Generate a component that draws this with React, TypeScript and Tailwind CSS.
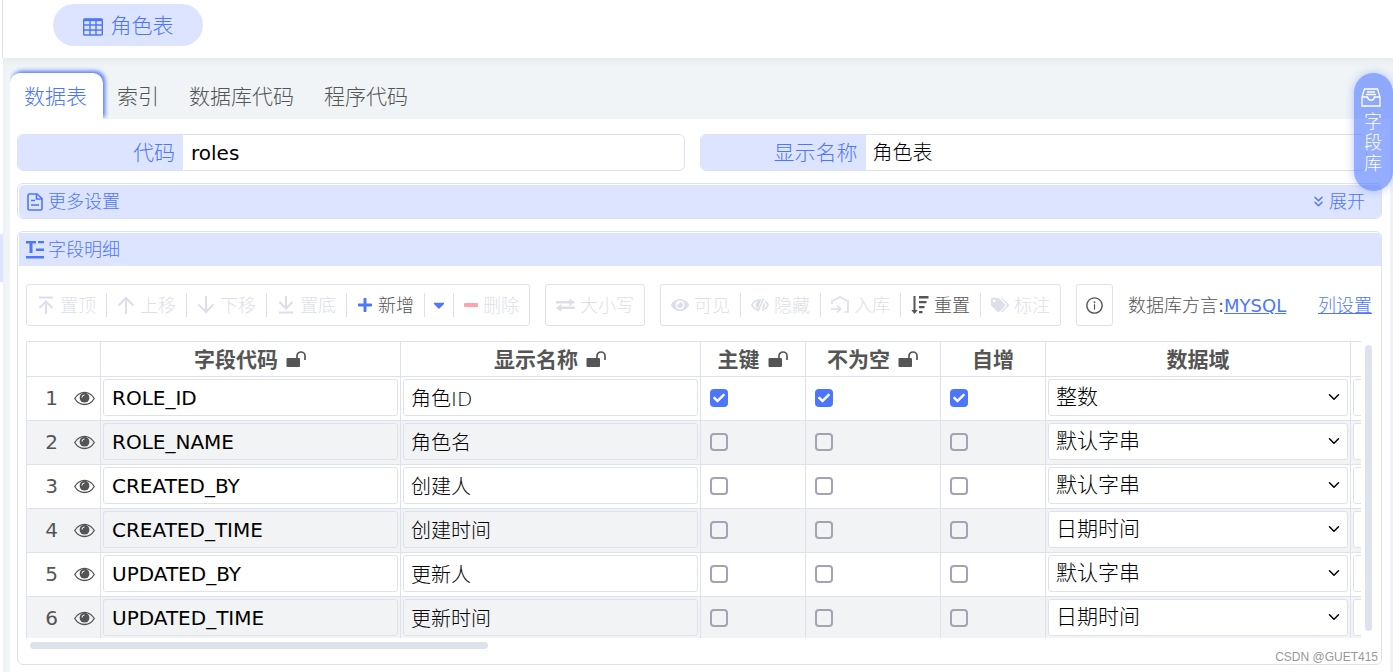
import React, { useState } from 'react';
import { AiOutlineInfoCircle } from 'react-icons/ai';
import { FaPlus, FaEye, FaTags, FaCaretDown, FaCheck } from 'react-icons/fa';
import { ChevronDown, ChevronsDown } from 'lucide-react';

interface Field {
  code: string;
  name: string;
  checked: boolean;
  domain: string;
}

const FIELDS: Field[] = [
  { code: 'ROLE_ID', name: '角色ID', checked: true, domain: '整数' },
  { code: 'ROLE_NAME', name: '角色名', checked: false, domain: '默认字串' },
  { code: 'CREATED_BY', name: '创建人', checked: false, domain: '默认字串' },
  { code: 'CREATED_TIME', name: '创建时间', checked: false, domain: '日期时间' },
  { code: 'UPDATED_BY', name: '更新人', checked: false, domain: '默认字串' },
  { code: 'UPDATED_TIME', name: '更新时间', checked: false, domain: '日期时间' },
];

const DOMAINS = ['整数', '默认字串', '日期时间'];
const TABS = ['数据表', '索引', '数据库代码', '程序代码'];

function TableIcon() {
  return (
    <svg width="20" height="18" viewBox="0 0 20 18" fill="none" stroke="currentColor" strokeWidth="1.4">
      <rect x="0.7" y="1" width="18.6" height="16" rx="1" />
      <path d="M1 2h18" strokeWidth="2.4" />
      <path d="M1 7h18M1 12h18M7 2v15M13 2v15" />
    </svg>
  );
}

function DocIcon() {
  return (
    <svg width="16" height="18" viewBox="0 0 16 18" fill="none" stroke="currentColor" strokeWidth="1.6">
      <path d="M10 1H2.5A1.5 1.5 0 0 0 1 2.5v13A1.5 1.5 0 0 0 2.5 17h11a1.5 1.5 0 0 0 1.5-1.5V5.500z" />
      <path d="M9.5 1.5V6H15M4 7.500h4M4 12h8" />
    </svg>
  );
}

function TextIcon() {
  return (
    <svg width="18" height="18" viewBox="0 0 18 18" fill="currentColor">
      <path d="M0 0h10v2.500H6.500V12h-3V2.500H0zM12 0h6v2.300h-6zM10 7.500h8V10h-8zM0 15h18v2.500H0z" />
    </svg>
  );
}

// up and down arrows of the move buttons, with a bar for top / bottom
function MoveIcon({ down, bar }: { down?: boolean; bar?: boolean }) {
  return (
    <svg
      width="18"
      height="18"
      viewBox="0 0 18 18"
      fill="none"
      stroke="currentColor"
      strokeWidth="2"
      className={down ? 'rotate-180' : ''}
    >
      {bar ? <path d="M2 1.500h14M9 18V6M2.500 12 9 5.500l6.500 6.500" /> : <path d="M9 18V2M1.500 9.500 9 2l7.500 7.500" />}
    </svg>
  );
}

function MinusIcon() {
  return (
    <svg width="14" height="14" viewBox="0 0 14 14" className="text-[#ffa3ab]">
      <rect y="5" width="14" height="4" rx="1" fill="currentColor" />
    </svg>
  );
}

function PlusIcon() {
  return <FaPlus size={16} className="text-[#4d76ff]" />;
}

function ExchangeIcon() {
  return (
    <svg width="19" height="14" viewBox="0 0 19 14" fill="currentColor">
      <path d="M0 3h13.500V0.200L19 4.200l-5.500 4V5.400H0zM19 11H5.500v2.800L0 10l5.500-4.200v2.800H19z" />
    </svg>
  );
}

function HiddenIcon() {
  return (
    <svg width="18" height="18" viewBox="0 0 18 18" fill="none" stroke="currentColor" strokeWidth="1.7">
      <path d="M7.500 14C4 13.500 1.800 11 .9 9 2.500 5.800 5.500 4 9 4h1.500M14 5.400c1.500 1 2.500 2.200 3.100 3.600-1 2.300-3.200 4.300-6.100 4.900" />
      <path d="M12.700 2.500 6.700 15.500" />
      <path d="M8.500 5.500a3.500 3.500 0 0 0-2 6z" fill="currentColor" />
      <path d="M12.800 7.500a3.500 3.500 0 0 1-1.800 4.500" />
    </svg>
  );
}

function ImportIcon() {
  return (
    <svg width="18" height="18" viewBox="0 0 18 18" fill="none" stroke="currentColor" strokeWidth="1.7">
      <path d="M1 8V5l8-4 8 4v11h-3.500" />
      <path d="M0 13h9M6 9.500 9.500 13 6 16.500" />
    </svg>
  );
}

function SortIcon() {
  return (
    <svg width="18" height="18" viewBox="0 0 18 18" fill="currentColor">
      <path d="M2.500 0h2v14h2.200l-3.200 4-3.200-4h2.200zM8 0h9.500v2.500H8zM8 5h7.500v2.300H8zM8 10h5.500v2.200H8zM8 15h3.500v2.200H8z" />
    </svg>
  );
}

function LockOpenIcon() {
  return (
    <svg width="21" height="18" viewBox="0 0 21 18" className="inline-block">
      <rect x="0.500" y="7" width="13.500" height="9" rx="1" fill="currentColor" />
      <path d="M11 7V5a4 4 0 0 1 8 0v4" fill="none" stroke="currentColor" strokeWidth="1.7" />
    </svg>
  );
}

function RowEyeIcon() {
  return (
    <svg width="21" height="21" viewBox="0 0 21 21" fill="none" stroke="currentColor">
      <path d="M.7 11.500C3 7.700 6.500 5.300 10.500 5.300s7.500 2.400 9.800 6.200c-2.300 3.800-5.800 6-9.800 6s-7.500-2.200-9.800-6z" strokeWidth="1.3" />
      <circle cx="10.500" cy="10.700" r="4.900" fill="currentColor" stroke="none" />
      <path d="M8 10.500A2.500 2.500 0 0 1 10.500 8" stroke="#fff" strokeWidth="1" />
    </svg>
  );
}

function DrawerIcon() {
  return (
    <svg width="20" height="19" viewBox="0 0 20 19" fill="none" stroke="currentColor" strokeWidth="1.3">
      <path d="M1 9 3.500 1h13L19 9v9H1z" />
      <path d="M1 9h5.500c.4 2 1.700 3.200 3.500 3.200s3.100-1.200 3.500-3.200H19M6 4h8M5 6.500h10" />
    </svg>
  );
}

function Separator() {
  return <span className="h-6 w-px bg-[#dde2ec]" />;
}

interface ToolProps {
  icon: React.ReactNode;
  label: string;
  active?: boolean;
}

function Tool({ icon, label, active }: ToolProps) {
  return (
    <button
      type="button"
      disabled={!active}
      className={
        active
          ? 'flex items-center gap-[5px] px-[10px] text-[18px] text-[#555]'
          : 'flex items-center gap-[5px] px-[10px] text-[18px] text-[#dcdfe9]'
      }
    >
      {icon}
      {label}
    </button>
  );
}

function ToolGroup({ children }: { children: React.ReactNode }) {
  return (
    <div className="flex h-[42px] shrink-0 items-center whitespace-nowrap rounded-[3px] border border-[#dde2ec]">
      {children}
    </div>
  );
}

function Check({ label, defaultChecked }: { label: string; defaultChecked: boolean }) {
  return (
    <label className="relative ml-[9px] flex size-[18px] items-center">
      <input
        type="checkbox"
        aria-label={label}
        defaultChecked={defaultChecked}
        className="peer size-[18px] appearance-none rounded-[4px] border-2 border-[#a3a3b3] checked:border-0 checked:bg-[#4d76ff]"
      />
      <FaCheck size={12} className="pointer-events-none absolute left-[3px] hidden text-white peer-checked:block" />
    </label>
  );
}

function FormField({ id, label, value, latin }: { id: string; label: string; value: string; latin?: boolean }) {
  return (
    <div className="flex h-[37px] flex-1 overflow-hidden rounded-md border border-[#dde2ec]">
      <label
        htmlFor={id}
        className="flex w-[165px] shrink-0 items-center justify-end bg-[#dde4ff] pr-2 pt-[2px] text-[21px] text-[#4d76ff]"
      >
        {label}
      </label>
      <input
        id={id}
        defaultValue={value}
        className={`min-w-0 flex-1 text-[20px] text-black outline-none ${latin ? 'px-2 font-normal' : 'px-[7px]'}`}
      />
    </div>
  );
}

function HeadCell({ label, lock }: { label: string; lock?: boolean }) {
  return (
    <th className="h-[35px] border-l border-t border-[#dde2ec] p-0 pt-[2px] text-center text-[21px] font-bold leading-8">
      <span className="flex items-center justify-center gap-2">
        {label}
        {lock && <LockOpenIcon />}
      </span>
    </th>
  );
}

const cell = 'border-l border-t border-[#dde2ec] p-0 pb-[2px]';
const box = 'mx-[2px] block h-[37px] w-[calc(100%-4px)] rounded-[3px] border border-[#dde2ec] text-black outline-none';

export default function App() {
  const [tab, setTab] = useState('数据表');

  return (
    <div className="flex min-h-screen overflow-hidden bg-white font-['DejaVu_Sans','Noto_Sans_CJK_SC',sans-serif] font-light text-[#555]">
      <div className="w-[3px] shrink-0 pt-[234px]">
        <div className="h-12 bg-[#dde4ff]" />
      </div>

      <div className="flex min-w-0 flex-1 flex-col">
        <header className="-ml-px h-[58px] border-l border-[#dde2ec] pl-[50px] pt-1">
          <button
            type="button"
            className="flex h-[42px] w-[150px] items-center justify-center gap-2 rounded-full bg-[#dde4ff] pt-[3px] text-[21px] text-[#4d76ff]"
          >
            <TableIcon />
            角色表
          </button>
        </header>

        <main className="flex flex-1 flex-col bg-[#f0f4f6] pl-[7px] pr-[3px] shadow-[inset_0_6px_6px_-3px_#e6eaec]">
          <nav className="flex h-[61px] items-end overflow-hidden text-[21px]">
            {TABS.map((t) => (
              <button
                key={t}
                type="button"
                onClick={() => setTab(t)}
                className={
                  t === tab
                    ? 'h-[46px] rounded-t-[10px] bg-white pl-[14px] pr-4 pt-[3px] text-[#4d76ff] shadow-[2px_-2px_4px_#4d76ff]'
                    : 'h-[46px] pl-[14px] pr-4 pt-[3px]'
                }
              >
                {t}
              </button>
            ))}
          </nav>

          <section className="flex-1 bg-white px-2 pb-[7px] pl-[7px] pt-[15px]">
            <div className="mr-[15px] flex gap-[15px]">
              <FormField id="code" label="代码" value="roles" latin />
              <FormField id="display" label="显示名称" value="角色表" />
            </div>

            <button
              type="button"
              className="mt-3 flex h-9 w-full rounded-md border border-[#dde2ec] pl-px pt-px text-[18px] text-[#4d76ff]"
            >
              <span className="flex h-full flex-1 items-center gap-[5px] rounded-[5px] bg-[#dde4ff] pl-2 pr-4">
                <DocIcon />
                更多设置
                <span className="ml-auto flex items-center gap-[2px]">
                  <ChevronsDown size={17} strokeWidth={2} />
                  展开
                </span>
              </span>
            </button>

            <div className="mt-3 overflow-hidden rounded-md border border-[#dde2ec] pt-px">
              <h2 className="ml-px flex h-[33px] items-center gap-1 bg-[#dde4ff] pl-[7px] text-[18px] text-[#4d76ff]">
                <TextIcon />
                字段明细
              </h2>

              <div className="pb-[15px] pl-2 pr-[9px] pt-[18px]">
                <div className="flex items-center gap-[15px]">
                  <ToolGroup>
                    <Tool icon={<MoveIcon bar />} label="置顶" />
                    <Separator />
                    <Tool icon={<MoveIcon />} label="上移" />
                    <Separator />
                    <Tool icon={<MoveIcon down />} label="下移" />
                    <Separator />
                    <Tool icon={<MoveIcon down bar />} label="置底" />
                    <Separator />
                    <Tool icon={<PlusIcon />} label="新增" active />
                    <Separator />
                    <button type="button" aria-label="新增" className="px-[5px] text-[#4d76ff]">
                      <FaCaretDown size={18} />
                    </button>
                    <Separator />
                    <Tool icon={<MinusIcon />} label="删除" />
                  </ToolGroup>
                  <ToolGroup>
                    <Tool icon={<ExchangeIcon />} label="大小写" />
                  </ToolGroup>
                  <ToolGroup>
                    <Tool icon={<FaEye size={18} />} label="可见" />
                    <Separator />
                    <Tool icon={<HiddenIcon />} label="隐藏" />
                    <Separator />
                    <Tool icon={<ImportIcon />} label="入库" />
                    <Separator />
                    <Tool icon={<SortIcon />} label="重置" active />
                    <Separator />
                    <Tool icon={<FaTags size={18} />} label="标注" />
                  </ToolGroup>
                  <ToolGroup>
                    <button type="button" aria-label="info" className="px-2">
                      <AiOutlineInfoCircle size={19} />
                    </button>
                  </ToolGroup>
                  <span className="whitespace-nowrap text-[18px]">
                    数据库方言<span className="font-normal">:</span>
                    <a href="#dialect" className="font-normal text-[#4d76ff] underline">MYSQL</a>
                  </span>
                  <a href="#columns" className="ml-auto whitespace-nowrap text-[18px] text-[#4d76ff] underline">
                    列设置
                  </a>
                </div>

                <div className="mt-[15px] flex gap-1">
                  <div className="h-[297px] min-w-0 flex-1 overflow-hidden">
                    <table className="w-[1624px] table-fixed border-separate border-spacing-0">
                      <colgroup>
                        <col className="w-[74px]" />
                        <col className="w-[300px]" />
                        <col className="w-[300px]" />
                        <col className="w-[105px]" />
                        <col className="w-[135px]" />
                        <col className="w-[105px]" />
                        <col className="w-[305px]" />
                        <col className="w-[300px]" />
                      </colgroup>
                      <thead>
                        <tr>
                          <HeadCell label="" />
                          <HeadCell label="字段代码" lock />
                          <HeadCell label="显示名称" lock />
                          <HeadCell label="主键" lock />
                          <HeadCell label="不为空" lock />
                          <HeadCell label="自增" />
                          <HeadCell label="数据域" />
                          <HeadCell label="" />
                        </tr>
                      </thead>
                      <tbody>
                        {FIELDS.map((f, i) => (
                          <tr key={f.code} className="h-11 even:bg-[#f2f3f5]">
                            <td className={cell}>
                              <div className="flex items-center justify-end gap-4 pr-[5px] text-[20px] font-normal">
                                {i + 1}
                                <RowEyeIcon />
                              </div>
                            </td>
                            <td className={cell}>
                              <input
                                aria-label="字段代码"
                                defaultValue={f.code}
                                className={`${box} px-2 text-[20px] font-normal`}
                              />
                            </td>
                            <td className={cell}>
                              <input
                                aria-label="显示名称"
                                defaultValue={f.name}
                                className={`${box} px-[7px] text-[20px]`}
                              />
                            </td>
                            <td className={cell}>
                              <Check label="主键" defaultChecked={f.checked} />
                            </td>
                            <td className={cell}>
                              <Check label="不为空" defaultChecked={f.checked} />
                            </td>
                            <td className={cell}>
                              <Check label="自增" defaultChecked={f.checked} />
                            </td>
                            <td className={cell}>
                              <div className="relative">
                                <select
                                  aria-label="数据域"
                                  defaultValue={f.domain}
                                  className={`${box} appearance-none bg-white px-[7px] text-[21px]`}
                                >
                                  {DOMAINS.map((d) => (
                                    <option key={d}>{d}</option>
                                  ))}
                                </select>
                                <ChevronDown
                                  size={18}
                                  strokeWidth={2}
                                  className="pointer-events-none absolute right-[7px] top-[9px] text-black"
                                />
                              </div>
                            </td>
                            <td className={cell}>
                              <input aria-label="备注" className={`${box} bg-white px-[7px] text-[20px]`} />
                            </td>
                          </tr>
                        ))}
                      </tbody>
                    </table>
                  </div>
                  <div className="mb-[7px] mt-1 w-[7px] rounded-full bg-[#dde2ec]" />
                </div>
                <div className="ml-1 mt-1 h-[7px] w-[34%] rounded-full bg-[#dde2ec]" />
              </div>
            </div>
          </section>
        </main>
      </div>

      <button
        type="button"
        className="absolute right-0 top-[73px] flex h-[118px] w-[39px] flex-col items-start rounded-full bg-[#4d76ff]/60 pl-[7px] pt-[15px] text-[18px] leading-[21px] text-white shadow-[0_0_10px_#4d76ff66]"
      >
        <DrawerIcon />
        <span className="ml-[3px] mt-1 w-[18px]">字段库</span>
      </button>
      <span className="absolute bottom-[6px] right-[15px] font-['Liberation_Sans',sans-serif] text-[12px] font-normal text-[#999]">
        CSDN @GUET415
      </span>
    </div>
  );
}
